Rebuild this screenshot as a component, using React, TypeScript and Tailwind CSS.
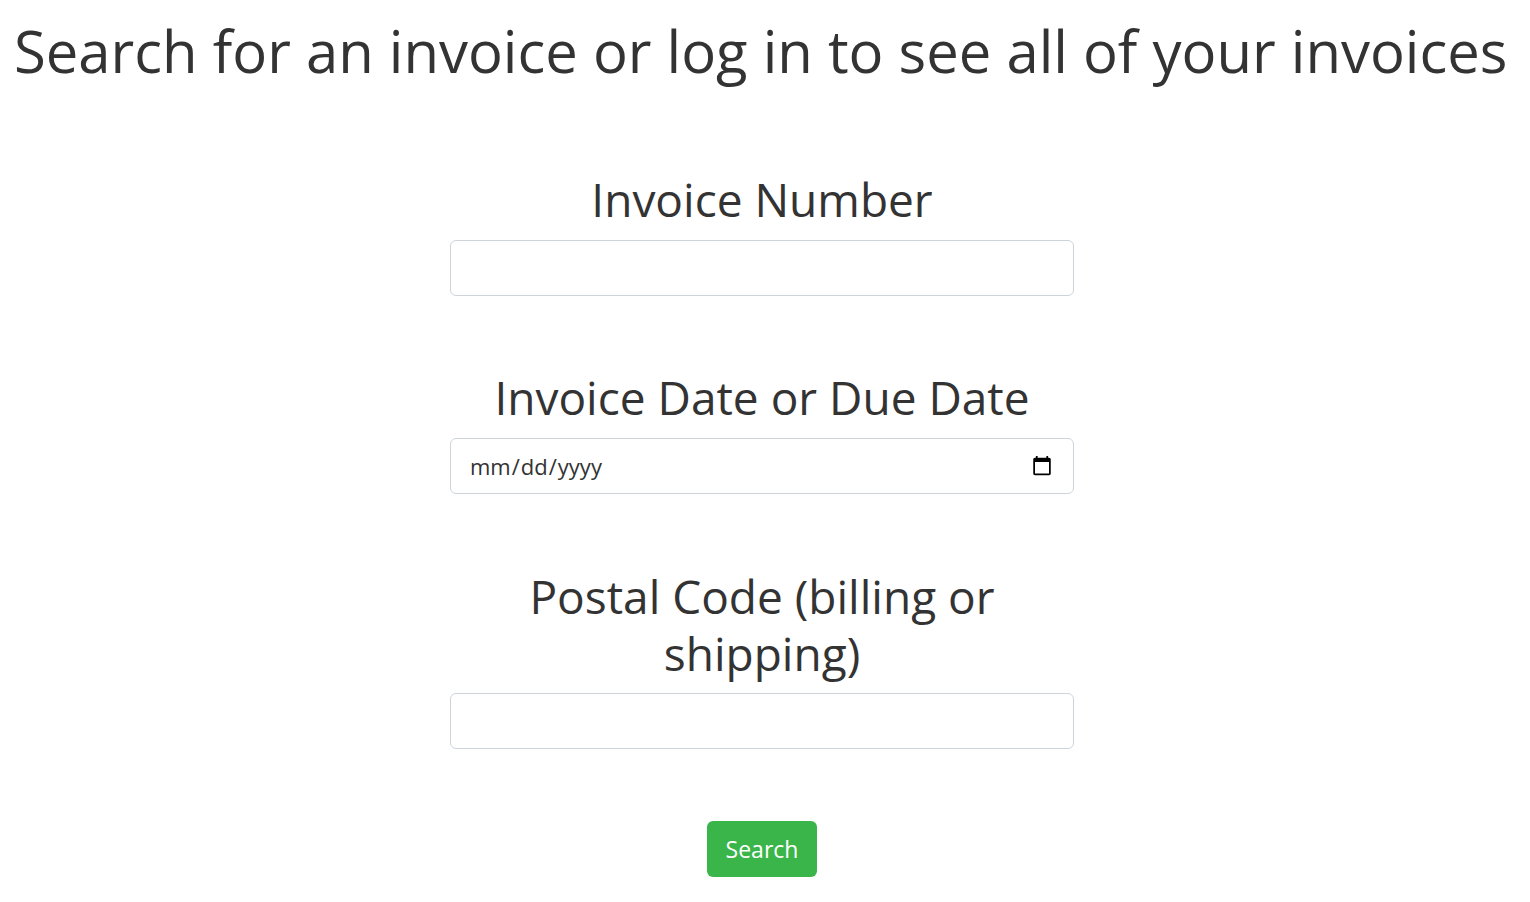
export default function App() {
  return (
    <div className="min-h-screen bg-white text-[#333333]" style={{ fontFamily: '"Open Sans", "Noto Sans", sans-serif' }}>
      <h1 className="pl-[14px] pt-[11px] text-[58px] leading-[80px] font-normal whitespace-nowrap">
        Search for an invoice or log in to see all of your invoices
      </h1>
      <div className="mx-auto w-[624px] pt-[81px] -translate-x-[3px]">
        <div className="text-center text-[46px] leading-[55px]">Invoice Number</div>
        <input className="mt-[13px] block h-[56px] w-full rounded-[6px] border border-[#ced4da] px-4 text-[22px]" />
        <div className="mt-[74px] text-center text-[46px] leading-[55px]">Invoice Date or Due Date</div>
        <input type="date" className="mt-[13px] block h-[56px] w-full rounded-[6px] border border-[#ced4da] pl-[18px] pr-[18px] text-[22px]" />
        <div className="mt-[74px] text-center text-[46px] leading-[57px]">Postal Code (billing or<br />shipping)</div>
        <input className="mt-[11px] block h-[56px] w-full rounded-[6px] border border-[#ced4da] px-4 text-[22px]" />
        <div className="mt-[72px] flex justify-center">
          <button className="h-[56px] w-[110px] rounded-[6px] bg-[#39b54a] text-[23px] text-white">Search</button>
        </div>
      </div>
    </div>
  );
}
